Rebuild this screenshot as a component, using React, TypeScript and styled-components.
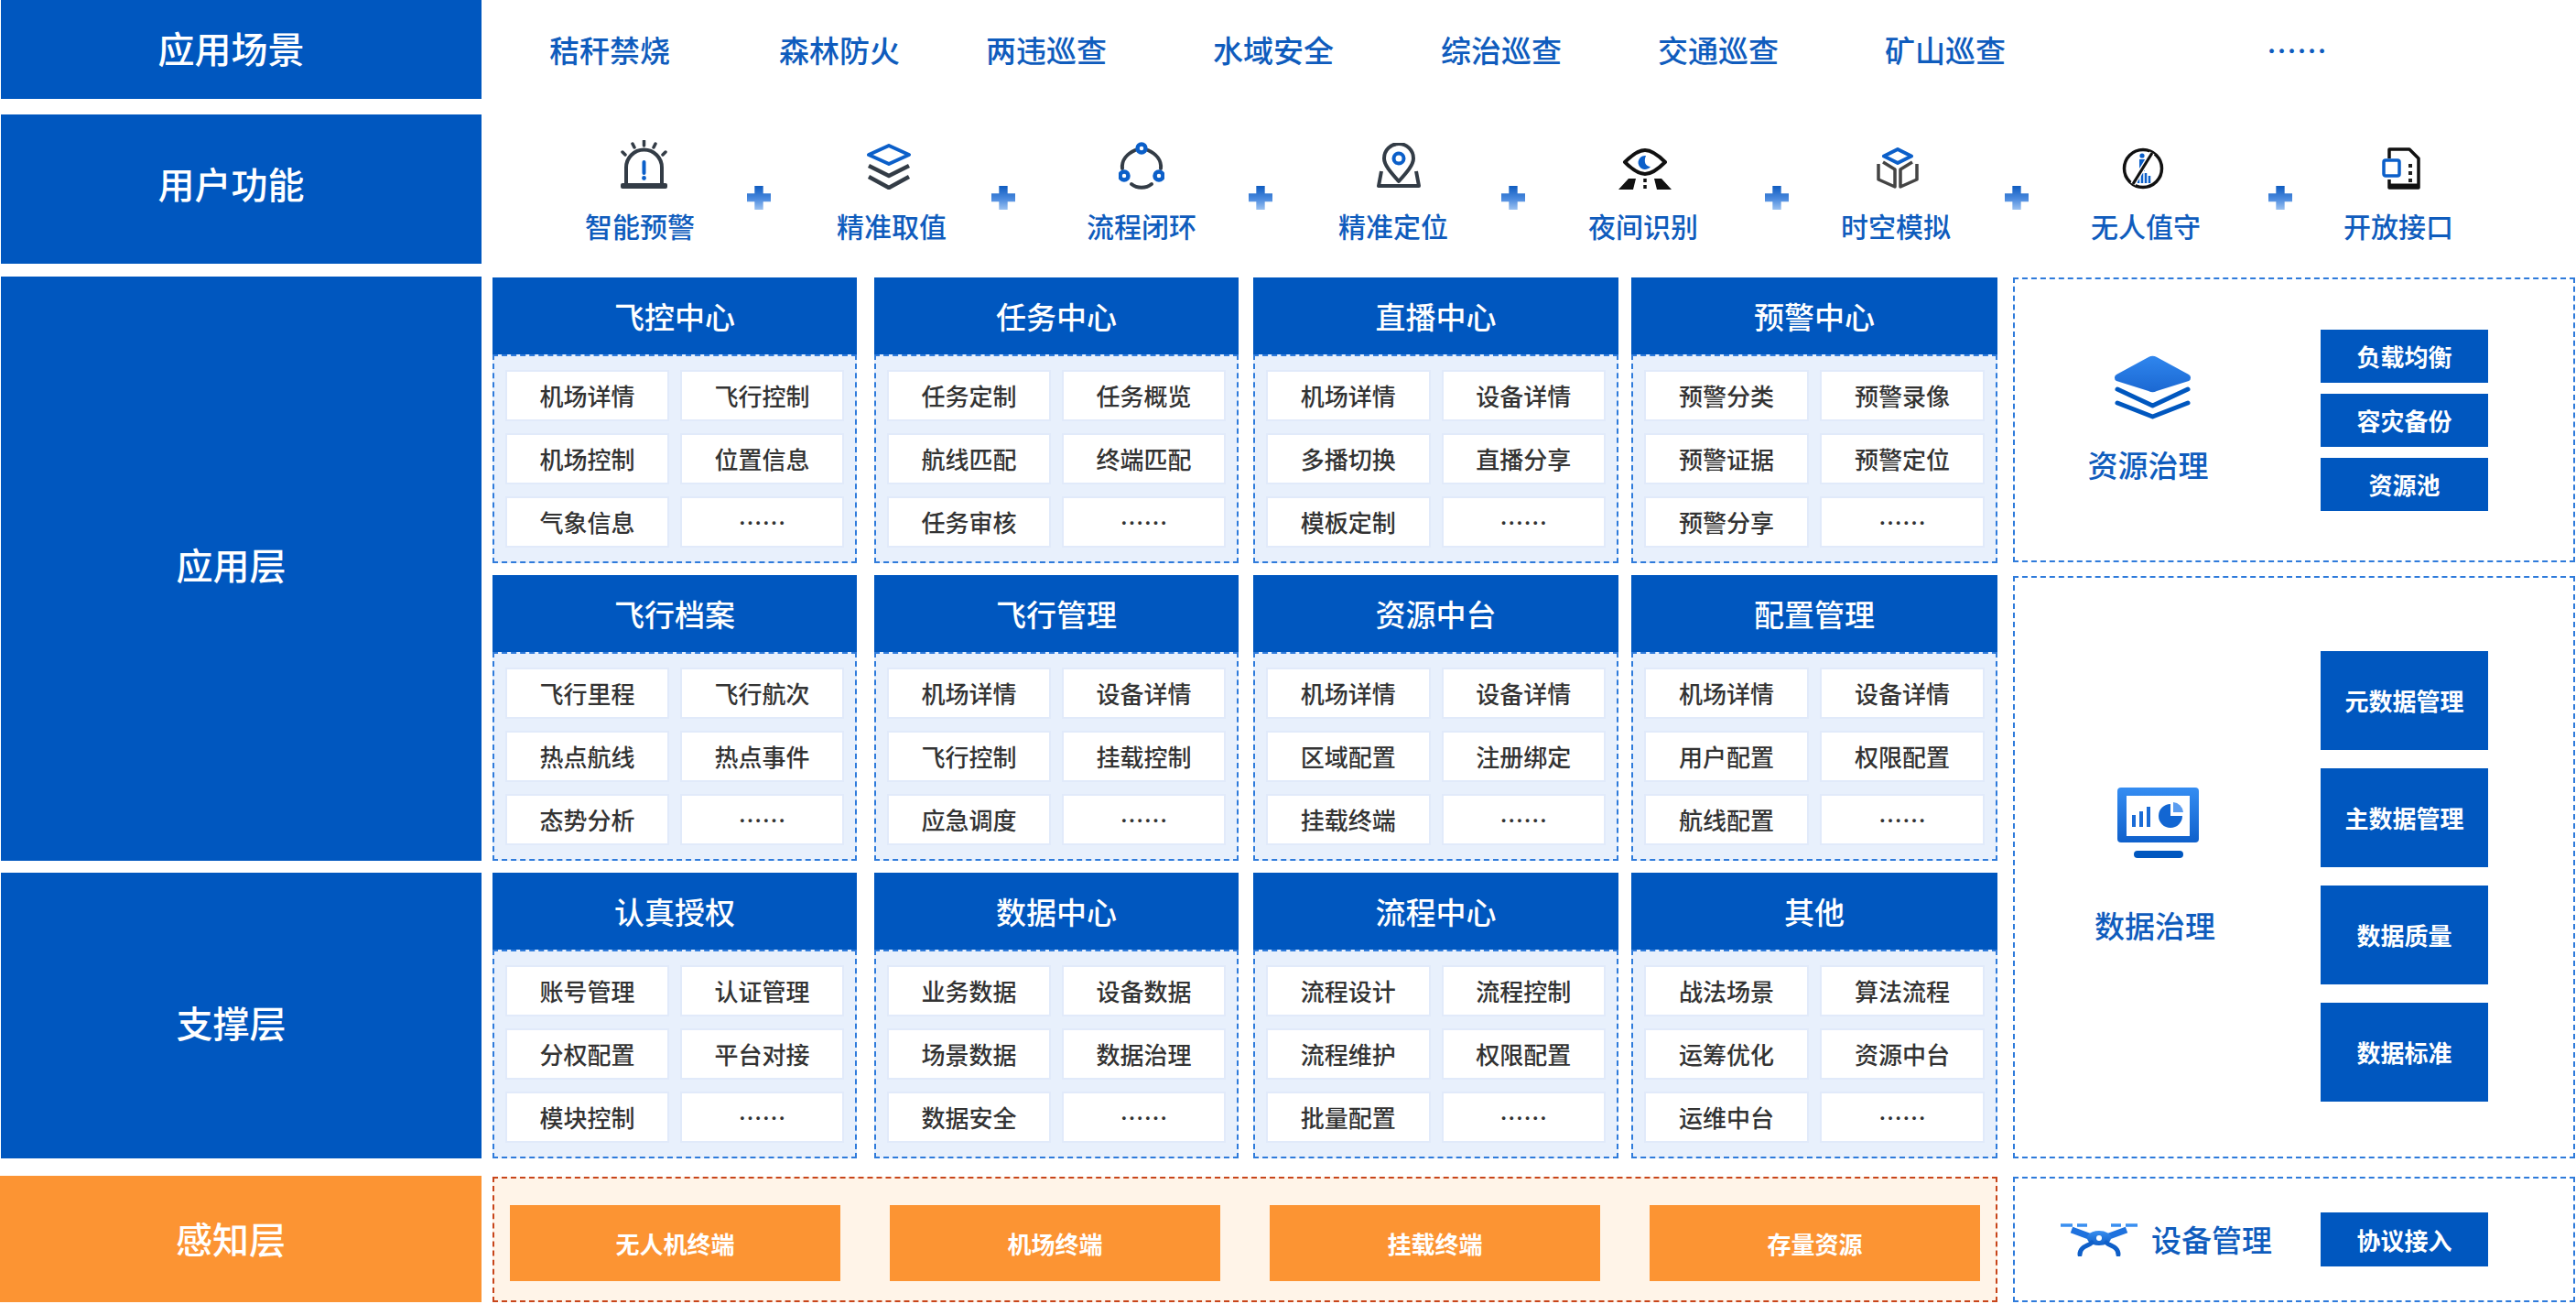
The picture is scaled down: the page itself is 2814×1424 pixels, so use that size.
import { Fragment } from "react";
import styled, { createGlobalStyle } from "styled-components";

const BLUE = "#0057bf";
const ORANGE = "#fc9433";
const TEXT_BLUE = "#0f5cbd";
const DASH = "#2f7bdb";

const GlobalStyle = createGlobalStyle`
  html, body {
    margin: 0;
    padding: 0;
    background: #fff;
  }
  body {
    width: 2814px;
    height: 1424px;
    overflow: hidden;
    font-family: "Noto Sans CJK SC", "Noto Sans", sans-serif;
  }
  * {
    box-sizing: border-box;
  }
`;

const Page = styled.div`
  width: 2814px;
  height: 1424px;
  display: flex;
  flex-direction: column;
`;

const Row = styled.div<{ $h: number; $top: number }>`
  display: flex;
  height: ${(p) => p.$h}px;
  margin-top: ${(p) => p.$top}px;
  flex: none;
`;

const Label = styled.div<{ $orange?: boolean; $h?: number; $pt?: number; $pb?: number }>`
  width: ${(p) => (p.$orange ? 526 : 525)}px;
  height: ${(p) => (p.$h ? `${p.$h}px` : "100%")};
  margin-left: ${(p) => (p.$orange ? 0 : 1)}px;
  padding: ${(p) => p.$pt ?? 0}px 22px ${(p) => p.$pb ?? 0}px 0;
  flex: none;
  display: flex;
  align-items: center;
  justify-content: center;
  background: ${(p) => (p.$orange ? ORANGE : BLUE)};
  color: #fff;
  font-size: 40px;
  font-weight: 500;
  line-height: 1;
`;

const Scenes = styled.div`
  display: flex;
  align-items: center;
  flex: none;
`;

const Scene = styled.div<{ $l: number }>`
  width: 134px;
  margin-left: ${(p) => p.$l}px;
  text-align: center;
  color: ${TEXT_BLUE};
  font-size: 33px;
  font-weight: 500;
  line-height: 1;
  white-space: nowrap;
`;

const Functions = styled.div`
  display: flex;
  margin-left: 113px;
  padding-top: 28px;
  flex: none;
`;

const FuncItem = styled.div`
  width: 120px;
  display: flex;
  flex-direction: column;
  align-items: center;
`;

const FuncIcon = styled.div<{ $dx: number }>`
  height: 54px;
  margin-left: ${(p) => p.$dx * 2}px;
  display: flex;
  align-items: flex-end;
  justify-content: center;
  svg {
    display: block;
  }
`;

const FuncName = styled.div`
  margin-top: 24px;
  color: ${TEXT_BLUE};
  font-size: 30px;
  font-weight: 500;
  line-height: 30px;
  white-space: nowrap;
`;

const Plus = styled.div<{ $l: number; $r: number }>`
  width: 26px;
  height: 26px;
  margin: 50px ${(p) => p.$r}px 0 ${(p) => p.$l}px;
  flex: none;
  background: linear-gradient(180deg, #0f5cc0 0%, #4b8ade 55%, #9cc2f1 100%);
  clip-path: polygon(32% 0, 68% 0, 68% 32%, 100% 32%, 100% 66%, 68% 66%, 68% 100%, 32% 100%, 32% 66%, 0 66%, 0 32%, 32% 32%);
`;

const Body = styled.div`
  display: flex;
  margin-top: 14px;
  flex: none;
`;

const Layers = styled.div`
  display: flex;
  flex-direction: column;
  gap: 13px;
  flex: none;
`;

const CardGrid = styled.div`
  margin-left: 12px;
  margin-top: 1px;
  display: grid;
  grid-template-columns: 417px 414px 413px 400px;
  grid-auto-rows: 312px;
  row-gap: 13px;
  flex: none;
`;

const Card = styled.div`
  display: flex;
  flex-direction: column;
  width: 398px;

  &:nth-child(4n + 3) {
    width: 399px;
  }

  &:nth-child(4n) {
    width: 400px;
  }
`;

const CardHead = styled.div`
  height: 84px;
  background: ${BLUE};
  color: #fff;
  font-size: 33px;
  font-weight: 500;
  line-height: 1;
  display: flex;
  align-items: center;
  justify-content: center;
  flex: none;
`;

const CardBody = styled.div`
  flex: 1;
  background: #e8f0fc;
  border: 2px dashed ${DASH};
  padding: 15px 12px;
  display: grid;
  grid-template-columns: 1fr 1fr;
  grid-auto-rows: 56px;
  column-gap: 12px;
  row-gap: 13px;
`;

const Cell = styled.div`
  background: #fff;
  border: 2px solid #e1eafa;
  color: #333;
  font-size: 26px;
  font-weight: 500;
  line-height: 1;
  display: flex;
  align-items: center;
  justify-content: center;
`;

const Side = styled.div`
  margin-left: 17px;
  margin-top: 1px;
  width: 614px;
  display: flex;
  flex-direction: column;
  gap: 15px;
  flex: none;
`;

const Panel = styled.div<{ $h: number; $top?: number }>`
  height: ${(p) => p.$h}px;
  border: 2px dashed ${DASH};
  padding: ${(p) => p.$top ?? 0}px 93px 0 0;
  display: flex;
  align-items: center;
  background: #fff;
`;

const Brand = styled.div<{ $w: number; $gap: number; $up: number; $shift: number }>`
  width: ${(p) => p.$w}px;
  margin-bottom: ${(p) => p.$up}px;
  display: flex;
  flex-direction: column;
  align-items: center;
  gap: ${(p) => p.$gap}px;
  svg {
    display: block;
    margin-left: ${(p) => p.$shift}px;
  }
`;

const BrandName = styled.div`
  color: ${TEXT_BLUE};
  font-size: 33px;
  font-weight: 500;
  line-height: 33px;
  white-space: nowrap;
`;

const Stack = styled.div<{ $gap: number }>`
  margin-left: auto;
  width: 183px;
  display: flex;
  flex-direction: column;
  gap: ${(p) => p.$gap}px;
`;

const SideButton = styled.div<{ $h: number }>`
  height: ${(p) => p.$h}px;
  background: ${BLUE};
  color: #fff;
  font-size: 26px;
  font-weight: 700;
  line-height: 1;
  display: flex;
  align-items: center;
  justify-content: center;
`;

const Sense = styled.div`
  margin-left: 12px;
  width: 1644px;
  margin-top: 1px;
  background: #fff4e8;
  border: 2px dashed #c8451a;
  padding: 29px 17px 21px 17px;
  display: grid;
  grid-template-columns: repeat(4, 1fr);
  column-gap: 54px;
  flex: none;
`;

const Terminal = styled.div`
  background: ${ORANGE};
  color: #fff;
  font-size: 26px;
  font-weight: 700;
  line-height: 1;
  display: flex;
  align-items: center;
  justify-content: center;
`;

const DevicePanel = styled.div`
  margin-left: 17px;
  margin-top: 1px;
  width: 614px;
  border: 2px dashed ${DASH};
  padding: 0 93px 0 50px;
  display: flex;
  align-items: center;
  gap: 15px;
  flex: none;
  svg {
    display: block;
  }
`;

const Dark = "#333c46";
const Accent = "#0b5fc9";

const AlarmIcon = () => (
  <svg width="53" height="54" viewBox="0 0 53 54" fill="none">
    <path d="M7 48V30a19.500 19.500 0 0 1 39 0v18" stroke={Dark} strokeWidth="4" />
    <rect x="1" y="47" width="51" height="6" rx="2" fill={Dark} />
    <path d="M26.500 24v12" stroke={Accent} strokeWidth="4" strokeLinecap="round" />
    <circle cx="26.500" cy="41.500" r="2.400" fill={Accent} />
    <path d="M26.500 1v5M14 4l2 4M39 4l-2 4M3 13l3 3M50 13l-3 3" stroke={Dark} strokeWidth="3.500" strokeLinecap="round" />
  </svg>
);

const StackIcon = () => (
  <svg width="50" height="50" viewBox="0 0 50 50" fill="none">
    <path d="M25 2L47 12 25 22 3 12z" stroke={Accent} strokeWidth="4" strokeLinejoin="round" />
    <path d="M3 24l22 11 22-11M3 36l22 12 22-12" stroke={Dark} strokeWidth="4.500" strokeLinejoin="round" />
  </svg>
);

const CycleIcon = () => (
  <svg width="50" height="52" viewBox="0 0 50 52" fill="none">
    <path d="M18 9C9 13 3 20 4 29M32 9c9 4 15 11 14 20M14 46c6 5 16 5 22 0" stroke={Dark} strokeWidth="4" strokeLinecap="round" />
    <circle cx="25" cy="7" r="4.500" stroke={Accent} strokeWidth="4.500" />
    <circle cx="6" cy="37" r="4.500" stroke={Accent} strokeWidth="4.500" />
    <circle cx="44" cy="37" r="4.500" stroke={Accent} strokeWidth="4.500" />
  </svg>
);

const PinIcon = () => (
  <svg width="48" height="51" viewBox="0 0 48 51" fill="none">
    <path d="M24 42C15 32 8 24 8 17a16 16 0 0 1 32 0c0 7-7 15-16 25z" stroke={Dark} strokeWidth="4" strokeLinejoin="round" />
    <circle cx="24" cy="17" r="5.500" stroke={Accent} strokeWidth="4" />
    <path d="M5 31L2 47h44l-3-16" stroke={Dark} strokeWidth="4" strokeLinejoin="round" />
  </svg>
);

const NightIcon = () => (
  <svg width="58" height="45" viewBox="0 0 58 45" fill="none">
    <path d="M29 2C36 2 44 8 51 15 44 22 36 28 29 28 22 28 14 22 7 15 14 8 22 2 29 2z" stroke="#111" strokeWidth="4" strokeLinejoin="round" />
    <path d="M30 8a7.500 7.500 0 1 0 5 12c-5 0-8-5-5-12z" fill={Accent} />
    <path d="M11 33h8l-3 12H0zM39 33h8l11 12H42z" fill="#111" />
    <path d="M29 33v12" stroke="#111" strokeWidth="3.500" strokeDasharray="4 3" />
  </svg>
);

const CubeIcon = () => (
  <svg width="46" height="46" viewBox="0 0 46 46" fill="none">
    <path d="M23 2l15 7.500-15 7.500-15-7.500z" stroke={Accent} strokeWidth="4" strokeLinejoin="round" />
    <path d="M7 16l13 8v19L2 35V18M39 16l-13 8v19l18-8V18" stroke="#444" strokeWidth="3.500" strokeLinejoin="round" />
  </svg>
);

const NoPersonIcon = () => (
  <svg width="46" height="46" viewBox="0 0 46 46" fill="none">
    <circle cx="22" cy="9" r="2.600" fill={Accent} />
    <path d="M19 13h6v13h-6z" fill={Accent} />
    <path d="M18 30v9M22 28v11M26 28v11M30 31v8" stroke={Accent} strokeWidth="2.500" />
    <circle cx="23" cy="23" r="20.500" stroke="#111" strokeWidth="3.500" />
    <path d="M33 6L12 40" stroke="#fff" strokeWidth="6" />
    <path d="M33 6L12 40" stroke="#111" strokeWidth="3.200" />
  </svg>
);

const DocIcon = () => (
  <svg width="42" height="46" viewBox="0 0 42 46" fill="none">
    <path d="M8 12V2h22l10 10v32H8v-9" stroke="#111" strokeWidth="3.500" strokeLinejoin="round" />
    <path d="M8 42h32" stroke="#111" strokeWidth="5" />
    <rect x="2" y="14" width="17" height="17" rx="2" fill="#fff" stroke={Accent} strokeWidth="3.500" />
    <path d="M29 18h4v4h-4zM29 26h4v4h-4zM29 34h4v4h-4z" fill="#222" />
  </svg>
);

const ResourceIcon = () => (
  <svg width="85" height="70" viewBox="0 0 85 70" fill="none">
    <defs>
      <linearGradient id="res" x1="0" y1="0" x2="0" y2="1">
        <stop offset="0" stopColor="#2f86ee" />
        <stop offset="1" stopColor="#1b68d2" />
      </linearGradient>
    </defs>
    <path d="M38 2a9 9 0 0 1 9 0l35 19a4 4 0 0 1 0 7L47 39a9 9 0 0 1-9 0L3 28a4 4 0 0 1 0-7z" fill="url(#res)" />
    <path d="M4 37l38.500 18L81 37M4 52l38.500 15L81 52" stroke={BLUE} strokeWidth="5" strokeLinecap="round" strokeLinejoin="round" />
  </svg>
);

const MonitorIcon = () => (
  <svg width="89" height="77" viewBox="0 0 89 77" fill="none">
    <defs>
      <linearGradient id="mon" x1="0" y1="0" x2="0" y2="1">
        <stop offset="0" stopColor="#358df2" />
        <stop offset="1" stopColor="#0f60cb" />
      </linearGradient>
    </defs>
    <rect width="89" height="60" rx="4" fill="url(#mon)" />
    <rect x="10" y="9" width="69" height="44" fill="#fff" />
    <path d="M16 30h4v13h-4zM24 26h4v17h-4zM32 21h4v22h-4z" fill="#1a6bd6" />
    <path d="M58 18a13 13 0 1 0 13 13H58z" fill="#1266d2" />
    <path d="M61 16a12 12 0 0 1 11 11H61z" fill="#5b9df0" />
    <rect x="18" y="69" width="54" height="8" rx="4" fill={BLUE} />
  </svg>
);

const DroneIcon = () => (
  <svg width="84" height="36" viewBox="0 0 84 36" fill="none">
    <defs>
      <linearGradient id="dr" x1="0" y1="0" x2="0" y2="1">
        <stop offset="0" stopColor="#3a8ff0" />
        <stop offset="1" stopColor="#0f5fc8" />
      </linearGradient>
    </defs>
    <path d="M0 2h13M18 2h11M55 2h11M71 2h13" stroke="#3a8ff0" strokeWidth="3.500" />
    <path d="M12 7L42 18 72 7" stroke="#1f72de" strokeWidth="7" strokeLinejoin="round" />
    <ellipse cx="42" cy="16" rx="13" ry="8" fill="url(#dr)" />
    <circle cx="42" cy="16" r="3" fill="#fff" />
    <path d="M34 21C30 25 21 25 21 34M50 21c4 4 13 4 13 13" stroke="#0f5fc8" strokeWidth="5" strokeLinecap="round" />
  </svg>
);

const scenes = [
  { name: "秸秆禁烧", l: 73 },
  { name: "森林防火", l: 117 },
  { name: "两违巡查", l: 92 },
  { name: "水域安全", l: 114 },
  { name: "综治巡查", l: 115 },
  { name: "交通巡查", l: 103 },
  { name: "矿山巡查", l: 114 },
  { name: "……", l: 250 },
];

const functions = [
  { name: "智能预警", icon: <AlarmIcon />, dx: 4, l: 57, r: 72 },
  { name: "精准取值", icon: <StackIcon />, dx: -3, l: 49, r: 78 },
  { name: "流程闭环", icon: <CycleIcon />, dx: 0, l: 57, r: 72 },
  { name: "精准定位", icon: <PinIcon />, dx: 6, l: 58, r: 69 },
  { name: "夜间识别", icon: <NightIcon />, dx: 2, l: 73, r: 57 },
  { name: "时空模拟", icon: <CubeIcon />, dx: 2, l: 59, r: 68 },
  { name: "无人值守", icon: <NoPersonIcon />, dx: -3, l: 74, r: 56 },
  { name: "开放接口", icon: <DocIcon />, dx: 3 },
];

const cards = [
  { title: "飞控中心", items: ["机场详情", "飞行控制", "机场控制", "位置信息", "气象信息"] },
  { title: "任务中心", items: ["任务定制", "任务概览", "航线匹配", "终端匹配", "任务审核"] },
  { title: "直播中心", items: ["机场详情", "设备详情", "多播切换", "直播分享", "模板定制"] },
  { title: "预警中心", items: ["预警分类", "预警录像", "预警证据", "预警定位", "预警分享"] },
  { title: "飞行档案", items: ["飞行里程", "飞行航次", "热点航线", "热点事件", "态势分析"] },
  { title: "飞行管理", items: ["机场详情", "设备详情", "飞行控制", "挂载控制", "应急调度"] },
  { title: "资源中台", items: ["机场详情", "设备详情", "区域配置", "注册绑定", "挂载终端"] },
  { title: "配置管理", items: ["机场详情", "设备详情", "用户配置", "权限配置", "航线配置"] },
  { title: "认真授权", items: ["账号管理", "认证管理", "分权配置", "平台对接", "模块控制"] },
  { title: "数据中心", items: ["业务数据", "设备数据", "场景数据", "数据治理", "数据安全"] },
  { title: "流程中心", items: ["流程设计", "流程控制", "流程维护", "权限配置", "批量配置"] },
  { title: "其他", items: ["战法场景", "算法流程", "运筹优化", "资源中台", "运维中台"] },
];

export default function App() {
  return (
    <Page>
      <GlobalStyle />
      <Row $h={108} $top={0}>
        <Label $pb={4}>应用场景</Label>
        <Scenes>
          {scenes.map((s) => (
            <Scene key={s.name} $l={s.l}>
              {s.name}
            </Scene>
          ))}
        </Scenes>
      </Row>
      <Row $h={163} $top={17}>
        <Label $pb={14}>用户功能</Label>
        <Functions>
          {functions.map((f) => (
            <Fragment key={f.name}>
              <FuncItem>
                <FuncIcon $dx={f.dx}>{f.icon}</FuncIcon>
                <FuncName>{f.name}</FuncName>
              </FuncItem>
              {f.l !== undefined && <Plus $l={f.l} $r={f.r ?? 0} />}
            </Fragment>
          ))}
        </Functions>
      </Row>
      <Body>
        <Layers>
          <Label $h={638} $pb={10}>应用层</Label>
          <Label $h={312} $pt={14}>支撑层</Label>
        </Layers>
        <CardGrid>
          {cards.map((c) => (
            <Card key={c.title}>
              <CardHead>{c.title}</CardHead>
              <CardBody>
                {c.items.map((i) => (
                  <Cell key={i}>{i}</Cell>
                ))}
                <Cell>……</Cell>
              </CardBody>
            </Card>
          ))}
        </CardGrid>
        <Side>
          <Panel $h={311}>
            <Brand $w={291} $gap={33} $up={6} $shift={10}>
              <ResourceIcon />
              <BrandName>资源治理</BrandName>
            </Brand>
            <Stack $gap={12}>
              <SideButton $h={58}>负载均衡</SideButton>
              <SideButton $h={58}>容灾备份</SideButton>
              <SideButton $h={58}>资源池</SideButton>
            </Stack>
          </Panel>
          <Panel $h={636} $top={20}>
            <Brand $w={306} $gap={57} $up={28} $shift={6}>
              <MonitorIcon />
              <BrandName>数据治理</BrandName>
            </Brand>
            <Stack $gap={20}>
              <SideButton $h={108}>元数据管理</SideButton>
              <SideButton $h={108}>主数据管理</SideButton>
              <SideButton $h={108}>数据质量</SideButton>
              <SideButton $h={108}>数据标准</SideButton>
            </Stack>
          </Panel>
        </Side>
      </Body>
      <Row $h={138} $top={19}>
        <Label $orange $pb={2}>感知层</Label>
        <Sense>
          <Terminal>无人机终端</Terminal>
          <Terminal>机场终端</Terminal>
          <Terminal>挂载终端</Terminal>
          <Terminal>存量资源</Terminal>
        </Sense>
        <DevicePanel>
          <DroneIcon />
          <BrandName>设备管理</BrandName>
          <Stack $gap={0}>
            <SideButton $h={59}>协议接入</SideButton>
          </Stack>
        </DevicePanel>
      </Row>
    </Page>
  );
}
